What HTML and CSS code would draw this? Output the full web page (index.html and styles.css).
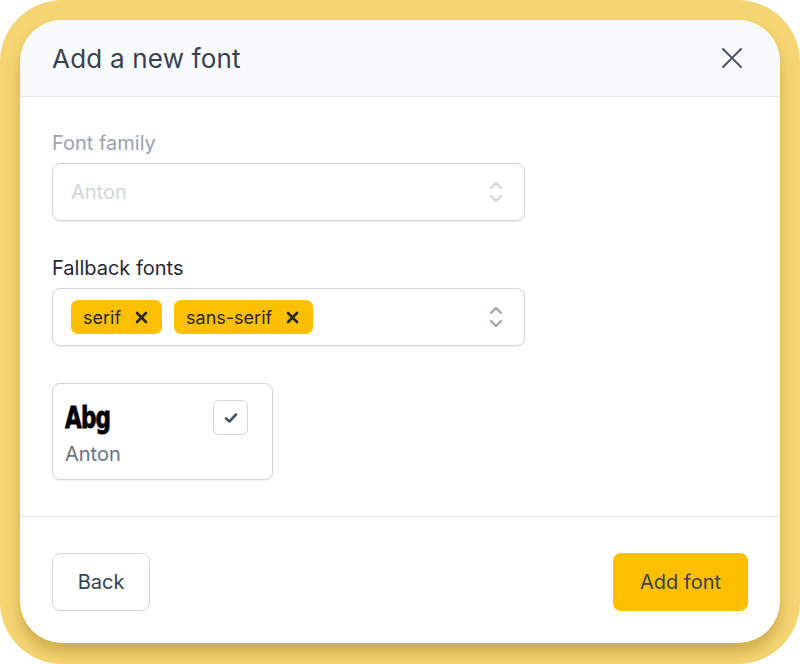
FILE: index.html
```html
<!DOCTYPE html>
<html lang="en">

<head>
    <meta charset="UTF-8">
    <meta name="viewport" content="width=device-width, initial-scale=1.0">
    <title>Add a new font</title>
    <link rel="stylesheet" href="styles.css">
</head>

<body>
    <!-- Yellow frame around the dialog -->
    <div class="frame">
        <div class="modal">

            <!-- Header -->
            <div class="modal-header">
                <h2>Add a new font</h2>
                <button class="close-btn" aria-label="Close">
                    <svg width="22" height="22" viewBox="0 0 22 22">
                        <path d="M2 2 L20 20 M20 2 L2 20" stroke="#4b5563" stroke-width="2" stroke-linecap="round" fill="none" />
                    </svg>
                </button>
            </div>

            <!-- Body -->
            <div class="modal-body">
                <label class="field-label disabled">Font family</label>
                <div class="select disabled">
                    <span class="placeholder">Anton</span>
                    <svg class="chevrons" width="14" height="24" viewBox="0 0 14 24">
                        <path d="M2 8 L7 3 L12 8 M2 16 L7 21 L12 16" stroke="#d1d5db" stroke-width="2.2" stroke-linecap="round" stroke-linejoin="round" fill="none" />
                    </svg>
                </div>

                <label class="field-label">Fallback fonts</label>
                <div class="select">
                    <div class="chips">
                        <span class="chip">serif
                            <svg class="chip-x" width="13" height="13" viewBox="0 0 13 13">
                                <path d="M2 2 L11 11 M11 2 L2 11" stroke="#27272a" stroke-width="2.6" stroke-linecap="round" fill="none" />
                            </svg>
                        </span>
                        <span class="chip">sans-serif
                            <svg class="chip-x" width="13" height="13" viewBox="0 0 13 13">
                                <path d="M2 2 L11 11 M11 2 L2 11" stroke="#27272a" stroke-width="2.6" stroke-linecap="round" fill="none" />
                            </svg>
                        </span>
                    </div>
                    <svg class="chevrons" width="14" height="24" viewBox="0 0 14 24">
                        <path d="M2 8 L7 3 L12 8 M2 16 L7 21 L12 16" stroke="#9ca3af" stroke-width="2.2" stroke-linecap="round" stroke-linejoin="round" fill="none" />
                    </svg>
                </div>

                <!-- Font preview card -->
                <div class="font-card">
                    <div class="font-card-top">
                        <span class="sample">Abg</span>
                        <span class="checkbox">
                            <svg width="14" height="12" viewBox="0 0 14 12">
                                <path d="M2 6.5 L5.5 9.5 L12 2.5" stroke="#4b5563" stroke-width="2.6" stroke-linecap="round" stroke-linejoin="round" fill="none" />
                            </svg>
                        </span>
                    </div>
                    <div class="font-name">Anton</div>
                </div>
            </div>

            <!-- Footer -->
            <div class="modal-footer">
                <button class="btn btn-back">Back</button>
                <button class="btn btn-primary">Add font</button>
            </div>
        </div>
    </div>
</body>

</html>
```

FILE: styles.css
```css
body {
    margin: 0;
    background-color: #fff;
    font-family: Inter, "Noto Sans", sans-serif;
}

.frame {
    width: 800px;
    height: 664px;
    box-sizing: border-box;
    padding: 20px 20px 21px;
    background-color: #f5d574;
    border-radius: 62px;
}

.modal {
    height: 100%;
    background-color: #fff;
    border-radius: 42px;
    overflow: hidden;
    display: flex;
    flex-direction: column;
    box-shadow: 0 10px 14px rgba(140, 100, 0, 0.35);
}

.modal-header {
    height: 76px;
    background-color: #f8fafc;
    border-bottom: 1px solid #e5e7eb;
    display: flex;
    align-items: center;
    justify-content: space-between;
    padding: 0 37px 0 32px;
}

.modal-header h2 {
    margin: 0;
    font-size: 26px;
    font-weight: 400;
    color: #374151;
    letter-spacing: 0.2px;
}

.close-btn {
    background: none;
    border: none;
    padding: 0;
    cursor: pointer;
    display: flex;
}

.modal-body {
    flex: 1;
    padding: 33px 32px 0;
    border-bottom: 1px solid #e5e7eb;
}

.field-label {
    display: block;
    font-size: 20px;
    line-height: 26px;
    color: #1f2937;
    margin-bottom: 7px;
}

.field-label.disabled {
    color: #9ca3af;
}

.select {
    width: 473px;
    height: 58px;
    box-sizing: border-box;
    border: 1px solid #d1d5db;
    border-radius: 8px;
    box-shadow: 0 1px 2px rgba(0, 0, 0, 0.08);
    display: flex;
    align-items: center;
    justify-content: space-between;
    padding: 0 21px 0 18px;
    margin-bottom: 34px;
}

.select.disabled .placeholder {
    font-size: 20px;
    color: #d1d5db;
}

.chevrons {
    display: block;
}

.chips {
    display: flex;
    gap: 12px;
}

.chip {
    background-color: #fdc000;
    border-radius: 7px;
    height: 34px;
    display: flex;
    align-items: center;
    padding: 0 14px 0 12px;
    font-size: 18px;
    color: #27272a;
}

.chip-x {
    display: block;
    margin-left: 14px;
}

.font-card {
    width: 221px;
    height: 97px;
    box-sizing: border-box;
    border: 1px solid #d1d5db;
    border-radius: 8px;
    box-shadow: 0 1px 2px rgba(0, 0, 0, 0.06);
    padding: 16px 24px 0 12px;
    margin-top: 37px;
}

.font-card-top {
    display: flex;
    justify-content: space-between;
    align-items: flex-start;
    height: 41px;
}

.sample {
    font-family: "Liberation Sans Narrow", "DejaVu Sans Condensed", sans-serif;
    font-weight: 700;
    font-size: 30px;
    line-height: 30px;
    color: #000;
    display: inline-block;
    transform: scaleX(0.8);
    transform-origin: left;
    letter-spacing: -1px;
    margin-top: 3px;
    -webkit-text-stroke: 0.8px #000;
}

.checkbox {
    width: 35px;
    height: 35px;
    box-sizing: border-box;
    border: 1px solid #d1d5db;
    border-radius: 6px;
    display: flex;
    align-items: center;
    justify-content: center;
}

.font-name {
    font-size: 20px;
    color: #6b7280;
    line-height: 26px;
}

.modal-footer {
    display: flex;
    justify-content: space-between;
    padding: 36px 32px 32px;
}

.btn {
    height: 58px;
    border-radius: 8px;
    font-family: Inter, "Noto Sans", sans-serif;
    font-size: 20px;
    color: #374151;
    cursor: pointer;
}

.btn-back {
    width: 98px;
    background-color: #fff;
    border: 1px solid #d1d5db;
}

.btn-primary {
    width: 135px;
    background-color: #fdc000;
    border: none;
}
```
